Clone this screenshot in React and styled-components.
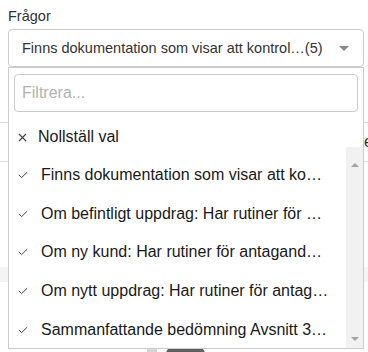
import React from "react";
import styled, { createGlobalStyle } from "styled-components";

const Global = createGlobalStyle`
  html, body { margin: 0; padding: 0; background: #fff; }
  body { font-family: "Liberation Sans", Arial, sans-serif; color: #333; }
  #root { width: 368px; height: 352px; overflow: hidden; }
`;

const Page = styled.div`
  position: relative;
  width: 368px;
  height: 352px;
  overflow: hidden;
`;

const Field = styled.div`
  padding: 8px 0 0 8px;
  width: 356px;
`;

const Label = styled.div`
  font-size: 14.5px;
  line-height: 16px;
  color: #333;
  margin: 0 0 5px 0;
`;

const SelectWrap = styled.div`
  position: relative;
  z-index: 2;
`;

const SelectBox = styled.div`
  box-sizing: border-box;
  height: 38px;
  border: 1px solid #ccc;
  border-radius: 4px;
  display: flex;
  align-items: center;
  padding: 0 14px 0 13px;
  font-size: 14.5px;
  color: #333;
  background: #fff;
`;

const SelectText = styled.span`
  flex: 0 1 auto;
  overflow: hidden;
  white-space: nowrap;
`;

const Caret = styled.span`
  margin-left: auto;
  width: 0;
  height: 0;
  border-left: 5px solid transparent;
  border-right: 5px solid transparent;
  border-top: 5px solid #888;
`;

const Menu = styled.div`
  position: absolute;
  top: 100%;
  left: 0;
  width: 356px;
  height: 282px;
  box-sizing: border-box;
  border: 1px solid #ccc;
  background: #fff;
  display: flex;
  flex-direction: column;
  padding-top: 6px;
`;

const FilterInput = styled.div`
  box-sizing: border-box;
  margin: 0 5px;
  height: 38px;
  border: 1px solid #ccc;
  border-radius: 4px;
  display: flex;
  align-items: center;
  padding: 0 7px;
  font-size: 16px;
  color: #b3b3b3;
`;

const ResetRow = styled.div`
  height: 35px;
  box-sizing: border-box;
  padding: 15px 0 0 9px;
  display: flex;
  align-items: center;
  font-size: 16px;
  line-height: 18px;
  color: #1a1a1a;
`;

const ListArea = styled.div`
  flex: 1;
  display: flex;
  min-height: 0;
`;

const List = styled.div`
  flex: 1;
  min-width: 0;
  padding-top: 9px;
`;

const Item = styled.div`
  height: 38.6px;
  display: flex;
  align-items: center;
  padding: 0 14px 0 9px;
  font-size: 16px;
  color: #1a1a1a;
`;

const IconBox = styled.span`
  width: ${(p) => p.$w}px;
  flex: 0 0 ${(p) => p.$w}px;
  display: flex;
  align-items: center;
  margin-right: ${(p) => p.$gap}px;
`;

const ItemText = styled.span`
  overflow: hidden;
  white-space: nowrap;
  text-overflow: ellipsis;
`;

const ScrollTrack = styled.div`
  width: 17px;
  background: #f1f1f1;
  display: flex;
  flex-direction: column;
  justify-content: space-between;
  align-items: center;
  padding: 16px 0 7px;
  box-sizing: border-box;
`;

const Arrow = styled.span`
  width: 0;
  height: 0;
  border-left: 4px solid transparent;
  border-right: 4px solid transparent;
  ${(p) =>
    p.$up
      ? "border-bottom: 4px solid #a3a3a3;"
      : "border-top: 4px solid #a3a3a3;"}
`;

/* background page content behind the dropdown */
const Background = styled.div`
  margin-top: 55px;
`;

const BgRow = styled.div`
  height: 38px;
  border-top: 1px solid #ddd;
  border-bottom: ${(p) => (p.$last ? "1px solid #ddd" : "none")};
  display: flex;
  justify-content: flex-end;
  align-items: center;
  font-size: 16px;
  color: #333;
`;

const BgCell = styled.span`
  width: 4px;
  overflow: hidden;
  white-space: nowrap;
`;

const Band = styled.div`
  margin-top: 105px;
  height: 15px;
  background: #f4f4f4;
`;

const Footer = styled.div`
  margin-top: 65px;
  display: flex;
  align-items: flex-start;
  padding-left: 147px;
  gap: 9px;
`;

const Square = styled.div`
  width: 10px;
  height: 10px;
  background: #d6d6d6;
  margin-top: 2px;
`;

const Pill = styled.div`
  width: 39px;
  height: 14px;
  border-radius: 7px;
  background: #5f5f5f;
`;

const Check = () => (
  <svg width="10" height="8" viewBox="0 0 10 8">
    <polyline points="0.8,3.8 3.6,6.6 9.2,1.2" fill="none" stroke="#4a4a4a" strokeWidth="1" />
  </svg>
);

const Cross = () => (
  <svg width="9" height="9" viewBox="0 0 9 9">
    <path d="M1 1 L8 8 M8 1 L1 8" stroke="#444" strokeWidth="1.1" fill="none" />
  </svg>
);

const items = [
  "Finns dokumentation som visar att ko…",
  "Om befintligt uppdrag: Har rutiner för …",
  "Om ny kund: Har rutiner för antagand…",
  "Om nytt uppdrag: Har rutiner för antag…",
  "Sammanfattande bedömning Avsnitt 3…",
];

export default function App() {
  return (
    <Page>
      <Global />
      <Field>
        <Label>Frågor</Label>
        <SelectWrap>
          <SelectBox>
            <SelectText>Finns dokumentation som visar att kontrol…(5)</SelectText>
            <Caret />
          </SelectBox>
          <Menu>
            <FilterInput>Filtrera...</FilterInput>
            <ResetRow>
              <IconBox $w={9} $gap={11}>
                <Cross />
              </IconBox>
              Nollställ val
            </ResetRow>
            <ListArea>
              <List>
                {items.map((t) => (
                  <Item key={t}>
                    <IconBox $w={10} $gap={13}>
                      <Check />
                    </IconBox>
                    <ItemText>{t}</ItemText>
                  </Item>
                ))}
              </List>
              <ScrollTrack>
                <Arrow $up />
                <Arrow />
              </ScrollTrack>
            </ListArea>
          </Menu>
        </SelectWrap>
      </Field>
      <Background>
        <BgRow $last>
          <BgCell>e</BgCell>
        </BgRow>
        <Band />
        <Footer>
          <Square />
          <Pill />
        </Footer>
      </Background>
    </Page>
  );
}
